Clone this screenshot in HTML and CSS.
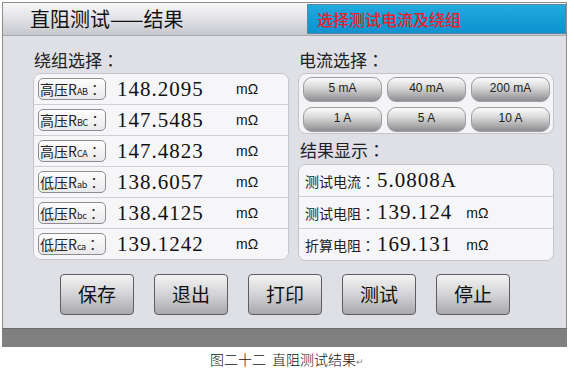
FILE: index.html
```html
<!DOCTYPE html>
<html>
<head lang="zh">
    <meta charset="UTF-8">
    <title>直阻测试结果</title>
    <link rel="stylesheet" href="styles.css">
</head>
<body>
    <div id="screen">
        <div id="titlebar">
            <h1>直阻测试——结果</h1>
            <div id="hint">选择测试电流及绕组</div>
        </div>
        <div id="main">
            <div class="col">
                <h2>绕组选择<i>：</i></h2>
                <ul class="list winding">
                    <li><span class="tag">高压R<sub>AB</sub><i>：</i></span><span class="num">148.2095</span><span class="unit">mΩ</span></li>
                    <li><span class="tag">高压R<sub>BC</sub><i>：</i></span><span class="num">147.5485</span><span class="unit">mΩ</span></li>
                    <li><span class="tag">高压R<sub>CA</sub><i>：</i></span><span class="num">147.4823</span><span class="unit">mΩ</span></li>
                    <li><span class="tag">低压R<sub>ab</sub><i>：</i></span><span class="num">138.6057</span><span class="unit">mΩ</span></li>
                    <li><span class="tag">低压R<sub>bc</sub><i>：</i></span><span class="num">138.4125</span><span class="unit">mΩ</span></li>
                    <li><span class="tag">低压R<sub>ca</sub><i>：</i></span><span class="num">139.1242</span><span class="unit">mΩ</span></li>
                </ul>
            </div>
            <div class="col">
                <h2>电流选择<i>：</i></h2>
                <div id="currents">
                    <span class="pill">5 mA</span>
                    <span class="pill">40 mA</span>
                    <span class="pill">200 mA</span>
                    <span class="pill">1 A</span>
                    <span class="pill">5 A</span>
                    <span class="pill">10 A</span>
                </div>
                <h2 class="second">结果显示<i>：</i></h2>
                <ul class="list result">
                    <li><span class="key">测试电流<i>：</i></span><span class="num">5.0808A</span></li>
                    <li><span class="key">测试电阻<i>：</i></span><span class="num">139.124</span><span class="unit">mΩ</span></li>
                    <li><span class="key">折算电阻<i>：</i></span><span class="num">169.131</span><span class="unit">mΩ</span></li>
                </ul>
            </div>
        </div>
        <div id="actions">
            <span class="btn">保存</span>
            <span class="btn">退出</span>
            <span class="btn">打印</span>
            <span class="btn">测试</span>
            <span class="btn">停止</span>
        </div>
    </div>
    <div id="band"></div>
    <p id="caption">图二十二&nbsp; 直阻测试结果<span class="mark">↵</span></p>
</body>
</html>
```

FILE: styles.css
```css
*{
    margin: 0;
    padding: 0;
}
ul{
    list-style: none;
}
i{
    font-style: normal;
    font-family: "Noto Sans CJK TC", "Noto Sans CJK SC", sans-serif;
}
body{
    background: #fff;
    font-family: "Noto Sans CJK SC", "Liberation Sans", sans-serif;
    color: #1a1a1a;
}
#screen{
    width: 563px;
    margin: 2px 0 0 2px;
    border: 1px solid #8c8c8c;
    border-bottom: 0;
    background: #dfe0e5;
}
#titlebar{
    height: 32px;
    display: flex;
    align-items: stretch;
    background: linear-gradient(#f7f7f9, #dcdde2 60%, #c6c7cc);
    border-bottom: 1px solid #a9aab0;
}
#titlebar h1{
    flex: 1;
    font-size: 20px;
    font-weight: normal;
    line-height: 32px;
    padding-left: 27px;
    color: #111;
}
#hint{
    width: 259px;
    margin: 1px 0;
    background: linear-gradient(#22a9de, #0c92cf);
    border: 1px solid #5a87a0;
    color: #e8202a;
    font-size: 16px;
    font-weight: 500;
    line-height: 28px;
    padding-left: 9px;
    box-sizing: border-box;
}
#main{
    display: flex;
    gap: 9px;
    padding: 10px 0 0 30px;
}
.col{
    width: 256px;
}
h2{
    font-size: 17px;
    font-weight: normal;
    line-height: 27px;
    height: 27px;
    padding-left: 1px;
    color: #222;
}
h2.second{
    height: 30px;
    line-height: 32px;
    padding-left: 2px;
}
.list{
    background: #f4f4f6;
    border: 1px solid #c4c5ca;
    border-radius: 8px;
    overflow: hidden;
}
.list li{
    display: flex;
    align-items: center;
    border-top: 1px solid #cfd0d5;
    background: #f6f6f8;
}
.list li:first-child{
    border-top: 0;
}
.winding li{
    height: 30px;
    padding-left: 4px;
}
.tag{
    display: inline-block;
    width: 68px;
    height: 22px;
    line-height: 20px;
    border: 1px solid #8d8d8d;
    border-radius: 5px;
    background: linear-gradient(#fdfdfd, #e9e9ec);
    font-size: 14px;
    padding-left: 1px;
    box-sizing: border-box;
    white-space: nowrap;
    overflow: hidden;
    color: #222;
}
.tag sub{
    font-size: 9px;
    vertical-align: 0;
    letter-spacing: -0.3px;
}
.num{
    font-family: "Liberation Serif", "DejaVu Serif", serif;
    font-size: 21px;
    letter-spacing: 1px;
    color: #111;
}
.winding .num{
    width: 119px;
    padding-left: 11px;
}
.unit{
    font-family: "Liberation Sans", sans-serif;
    font-size: 14px;
    color: #111;
}
#currents{
    display: grid;
    grid-template-columns: repeat(3, 79px);
    gap: 4px 5px;
    height: 61px;
    padding: 3px 0 0 4px;
    box-sizing: border-box;
    background: #f4f4f6;
    border: 1px solid #c4c5ca;
    border-radius: 8px;
}
.pill{
    height: 25px;
    line-height: 21px;
    text-align: center;
    font-family: "Liberation Sans", sans-serif;
    font-size: 12px;
    color: #222;
    border: 1px solid #9d9da2;
    border-radius: 9px;
    background: linear-gradient(#fbfbfb, #dedede 35%, #b4b4b6 70%, #8d8d90);
    box-sizing: border-box;
}
.result li{
    height: 31px;
    padding-left: 6px;
}
.key{
    font-size: 14px;
    width: 72px;
    color: #222;
}
.result .num{
    margin-right: 14px;
}
#actions{
    display: flex;
    gap: 20px;
    padding: 13px 0 13px 57px;
}
.btn{
    width: 74px;
    height: 41px;
    line-height: 38px;
    text-align: center;
    font-size: 19px;
    color: #111;
    border: 1px solid #5e5e60;
    border-radius: 4px;
    background: linear-gradient(#f3f3f4, #d3d3d5 50%, #a9a9ac);
    box-sizing: border-box;
}
#band{
    width: 565px;
    height: 18px;
    margin-left: 2px;
    background: #808080;
    border-top: 1px solid #6c6c6c;
}
#caption{
    font-size: 14px;
    font-weight: 300;
    text-align: center;
    width: 570px;
    line-height: 24px;
    padding-left: 2px;
    color: #111;
}
.mark{
    font-size: 9px;
    color: #888;
}
```
